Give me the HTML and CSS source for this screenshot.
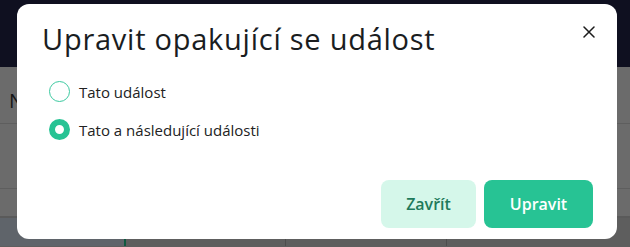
FILE: index.html
```html
<!DOCTYPE html>
<html lang="cs">
<head>
<meta charset="utf-8">
<link rel="stylesheet" href="styles.css">
</head>
<body>
<div class="app">
  <header class="topbar"></header>
  <main class="content">
    <div class="row row-head"><span class="col-label">N</span></div>
    <div class="row row-mid"></div>
    <div class="row row-thin"></div>
    <div class="row row-last">
      <div class="cell cell-a"></div>
      <div class="cell cell-b"></div>
      <div class="cell cell-c"></div>
      <div class="cell cell-d"></div>
    </div>
  </main>
</div>

<div class="modal" role="dialog">
  <div class="modal-head">
    <h1 class="modal-title">Upravit opakující se událost</h1>
    <button class="close" aria-label="Zavřít">
      <svg width="12" height="12" viewBox="0 0 12 12"><path d="M1 1L11 11M11 1L1 11" stroke="#1c1c1c" stroke-width="1.5" stroke-linecap="round"/></svg>
    </button>
  </div>
  <div class="options">
    <label class="option"><span class="radio"></span><span class="opt-text">Tato událost</span></label>
    <label class="option"><span class="radio checked"></span><span class="opt-text">Tato a následující události</span></label>
  </div>
  <div class="actions">
    <button class="btn btn-light">Zavřít</button>
    <button class="btn btn-primary">Upravit</button>
  </div>
</div>
</body>
</html>
```

FILE: styles.css
```css
* { box-sizing: border-box; }
html, body { margin: 0; padding: 0; }
body {
  width: 630px;
  height: 247px;
  overflow: hidden;
  font-family: "Open Sans", Lato, sans-serif;
  background: #6b6b6b;
  position: relative;
}
.app { display: flex; flex-direction: column; height: 247px; }
.topbar { height: 67px; background: #0f1020; flex: none; }
.content { flex: 1; display: flex; flex-direction: column; background: #6b6b6b; }
.row { border-bottom: 1px solid #5e5e5e; flex: none; }
.row-head { height: 57px; padding: 20px 0 0 9px; }
.col-label { font-size: 20px; color: #161616; font-weight: 500; }
.row-mid { height: 65px; }
.row-thin { height: 29px; border-bottom: 2px solid #5a5a5a; }
.row-last { flex: 1; display: flex; background: #5e5e5e; }
.cell { height: 100%; }
.cell-a { width: 126px; background: #5f646a; border-right: 2px solid #0f5a40; }
.cell-b { width: 160px; border-right: 1px solid #4d4d4d; }
.cell-c { width: 161px; border-right: 1px solid #4d4d4d; }
.cell-d { flex: 1; }

.modal {
  position: absolute;
  left: 17px;
  top: 4px;
  width: 600px;
  height: 235px;
  background: #fff;
  border-radius: 12px;
  padding: 0 24px 11px 25px;
  display: flex;
  flex-direction: column;
}
.modal-head { display: flex; justify-content: space-between; align-items: flex-start; padding-top: 15px; }
.modal-title {
  margin: 0;
  font-size: 29px;
  font-weight: 500;
  color: #1a1d1f;
  line-height: 40px;
  letter-spacing: 0.75px;
}
.close {
  border: 0; background: none; padding: 0;
  width: 12px; height: 12px; margin: 7px -2px 0 0;
  display: flex;
}
.options { display: flex; flex-direction: column; gap: 17px; padding: 22px 0 0 7px; }
.option { display: flex; align-items: center; gap: 9px; height: 21px; }
.radio {
  width: 21px; height: 21px; border-radius: 50%;
  border: 1.5px solid #3cc9a0;
  flex: none;
}
.radio.checked { border: 6px solid #27c394; }
.opt-text { font-size: 15px; color: #222; }
.actions { margin-top: auto; display: flex; justify-content: flex-end; gap: 8px; }
.btn {
  border: 0; height: 48px; border-radius: 8px;
  font-family: "Open Sans", sans-serif; font-size: 16px; font-weight: 600;
}
.btn-light { width: 95px; background: #d5f7ea; color: #1e7a5b; }
.btn-primary { width: 109px; background: #27c394; color: #fff; }
```
